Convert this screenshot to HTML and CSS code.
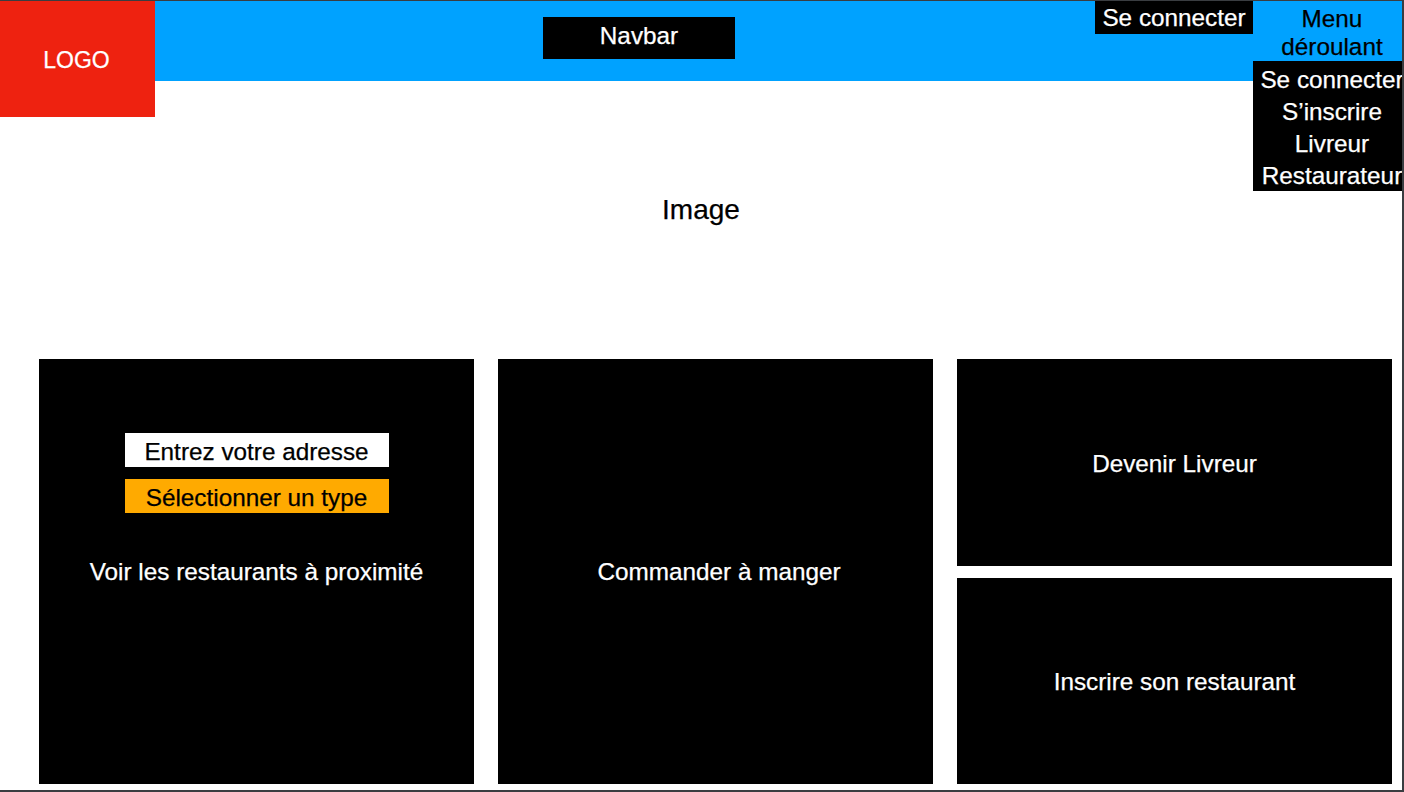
FILE: index.html
```html
<!DOCTYPE html>
<html lang="fr">
<head>
<meta charset="utf-8">
<title>Accueil</title>
<link rel="stylesheet" href="styles.css">
</head>
<body>
<div class="frame">
  <header class="header">
    <div class="logo">LOGO</div>
    <nav class="bar">
      <div class="navbox">Navbar</div>
      <div class="login">Se connecter</div>
      <div class="menu">
        <div class="menu-title">Menu<br>déroulant</div>
        <ul class="dropdown">
          <li>Se connecter</li>
          <li>S’inscrire</li>
          <li>Livreur</li>
          <li>Restaurateur</li>
        </ul>
      </div>
    </nav>
  </header>
  <section class="hero">Image</section>
  <main class="cards">
    <div class="card card-search">
      <div class="field field-address">Entrez votre adresse</div>
      <div class="field field-type">Sélectionner un type</div>
      <div class="card-label label-search">Voir les restaurants à proximité</div>
    </div>
    <div class="card card-center card-order">
      <div class="card-label">Commander à manger</div>
    </div>
    <div class="stack">
      <div class="card card-center">
        <div class="card-label">Devenir Livreur</div>
      </div>
      <div class="card card-center">
        <div class="card-label">Inscrire son restaurant</div>
      </div>
    </div>
  </main>
</div>
</body>
</html>
```

FILE: styles.css
```css
* { box-sizing: border-box; }
html, body { margin: 0; padding: 0; background: #ffffff; }
body {
  font-family: "Liberation Sans", Arial, Helvetica, sans-serif;
  font-size: 24.3px;
  color: #000;
  -webkit-text-stroke: 0.25px currentColor;
}
.frame {
  width: 1404px;
  height: 792px;
  border-top: 1px solid #3a3d41;
  border-right: 2px solid #3a3d41;
  border-bottom: 2px solid #3a3d41;
  overflow: hidden;
  display: flex;
  flex-direction: column;
}
.header {
  display: flex;
  align-items: flex-start;
  height: 80px;
  flex: 0 0 80px;
  position: relative;
  z-index: 2;
}
.logo {
  flex: 0 0 155px;
  width: 155px;
  height: 116px;
  padding-top: 3px;
  padding-right: 2px;
  background: #ee2210;
  color: #fff;
  font-size: 23px;
  display: flex;
  align-items: center;
  justify-content: center;
}
.bar {
  flex: 0 0 auto;
  height: 80px;
  background: #00a2ff;
  display: flex;
  align-items: flex-start;
}
.navbox {
  margin-left: 388px;
  margin-top: 16px;
  width: 192px;
  height: 42px;
  padding-top: 5px;
  line-height: 28px;
  background: #000;
  color: #fff;
  text-align: center;
}
.login {
  margin-left: 360px;
  width: 158px;
  height: 33px;
  line-height: 33px;
  background: #000;
  color: #fff;
  text-align: center;
  white-space: nowrap;
}
.menu {
  position: relative;
  width: 158px;
  text-align: center;
}
.menu-title {
  padding-top: 4px;
  line-height: 28px;
  color: #000;
}
.dropdown {
  position: absolute;
  top: 60px;
  left: 0;
  width: 158px;
  height: 130px;
  margin: 0;
  padding: 3px 0 0;
  list-style: none;
  background: #000;
  color: #fff;
}
.dropdown li {
  line-height: 32px;
  white-space: nowrap;
}
.hero {
  flex: 0 0 278px;
  height: 278px;
  padding-top: 113px;
  text-align: center;
  font-size: 28px;
  line-height: 32px;
}
.cards {
  display: grid;
  grid-template-columns: 435px 435px 435px;
  column-gap: 24px;
  padding-left: 39px;
  height: 425px;
}
.card {
  background: #000;
  color: #fff;
}
.card-center {
  display: flex;
  align-items: center;
  justify-content: center;
}
.card-order { padding-left: 7px; }
.card-label {
  line-height: 28px;
  text-align: center;
}
.stack {
  display: flex;
  flex-direction: column;
  gap: 12px;
}
.stack .card {
  flex: 1;
  padding-top: 3px;
}
.card-search {
  display: flex;
  flex-direction: column;
  align-items: center;
  padding-top: 74px;
  gap: 12px;
}
.field {
  width: 264px;
  height: 34px;
  padding-top: 4px;
  line-height: 30px;
  text-align: center;
  color: #000;
}
.field-address { background: #fff; }
.field-type { background: #ffaa00; }
.label-search { margin-top: 33px; }
```
